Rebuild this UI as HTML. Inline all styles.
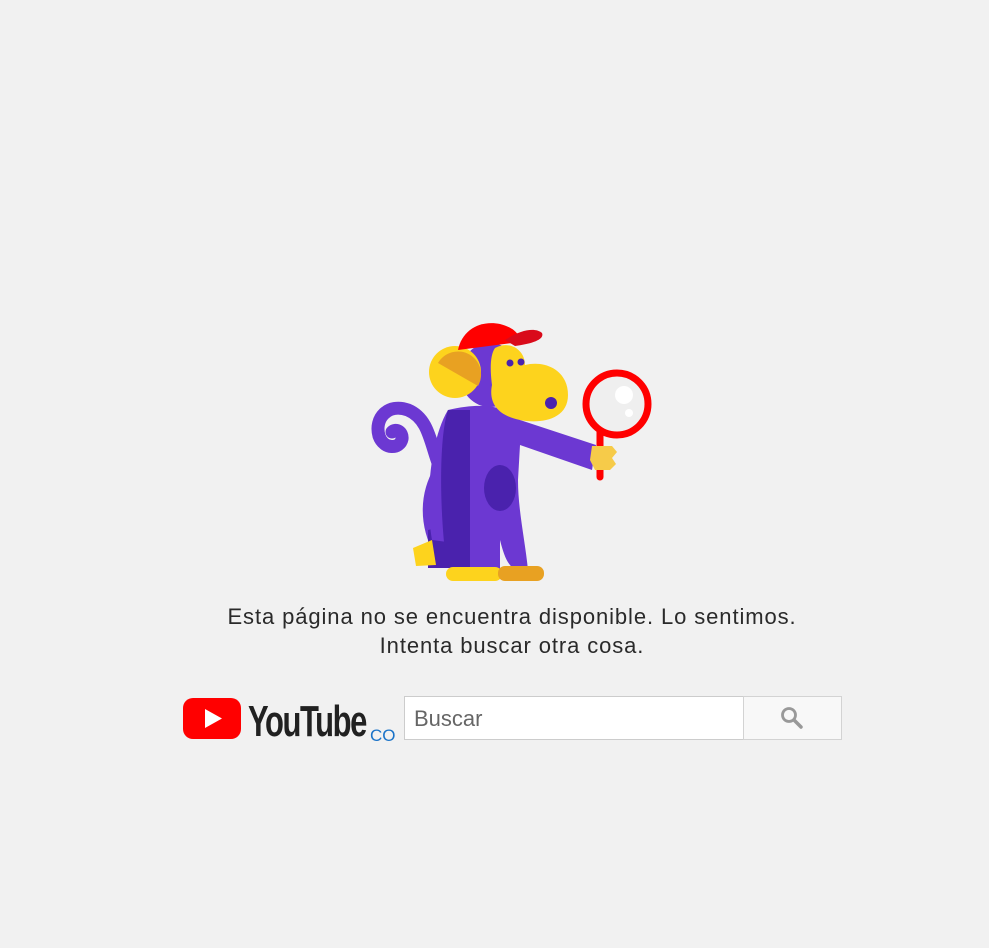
<!DOCTYPE html>
<html><head><meta charset="utf-8"><style>
html,body{margin:0;padding:0;background:#f1f1f1;width:989px;height:948px;overflow:hidden;font-family:"Liberation Sans",Arial,sans-serif}
.t{position:absolute;left:0;width:1024px;text-align:center;font-size:22px;letter-spacing:0.9px;color:#2a2a2a;line-height:28px}
</style></head><body>
<svg style="position:absolute;left:0;top:0" width="989" height="948" viewBox="0 0 989 948">
 <!-- tail -->
 <path d="M445 480 C430 450 432 420 408 410 C388 403 374 418 379 436 C384 450 400 449 402 439 C403 432 396 428 392 432" fill="none" stroke="#6c38d2" stroke-width="13" stroke-linecap="round"/>
 <path d="M440 470 C425 495 425 525 440 552" fill="none" stroke="#6c38d2" stroke-width="12"/>
 <!-- back leg -->
 <path d="M428 530 L470 520 L468 568 L428 568 Z" fill="#4a22ad"/>
 <path d="M413 548 L432 540 L436 565 L416 566 Z" fill="#fdd31d"/>
 <!-- body -->
 <path d="M448 410 C430 440 425 500 432 540 L470 545 L470 575 L500 575 L500 540 C505 560 510 570 520 570 L528 570 C525 540 518 510 518 480 L520 445 L592 470 L596 445 L520 420 C510 410 490 400 448 410 Z" fill="#6c38d2"/>
 <path d="M448 410 C438 440 440 520 447 568 L470 568 L470 410 Z" fill="#4a22ad"/>
 <ellipse cx="500" cy="488" rx="16" ry="23" fill="#4a22ad"/>
 <!-- feet -->
 <rect x="446" y="567" width="56" height="14" rx="7" fill="#fdd31d"/>
 <rect x="498" y="566" width="46" height="15" rx="7" fill="#e8a122"/>
 <!-- head -->
 <ellipse cx="490" cy="375" rx="30" ry="32" fill="#6c38d2"/>
 <circle cx="455" cy="372" r="26" fill="#fdd31d"/>
 <path d="M438 363 A22 22 0 0 1 478 386 Z" fill="#e8a122"/>
 <path d="M495 348 C510 340 525 350 525 365 C545 360 568 370 568 395 C568 420 540 424 520 420 C500 416 488 405 492 385 C490 370 490 355 495 348 Z" fill="#fdd31d"/>
 <circle cx="510" cy="363" r="3.5" fill="#4a22ad"/><circle cx="521" cy="362" r="3.5" fill="#4a22ad"/>
 <circle cx="551" cy="403" r="6" fill="#4a22ad"/>
 <!-- cap -->
 <path d="M458 350 C462 330 480 320 500 324 C515 328 520 335 520 342 Z" fill="#f00"/>
 <path d="M505 340 C520 330 535 327 542 333 C545 340 530 344 515 346 Z" fill="#d90a1a"/>
 <!-- magnifier -->
 <line x1="600" y1="430" x2="600" y2="477" stroke="#f00" stroke-width="7" stroke-linecap="round"/>
 <circle cx="617" cy="404" r="31" fill="#efefef" stroke="#f00" stroke-width="7"/>
 <circle cx="624" cy="395" r="9" fill="#fff"/><circle cx="629" cy="413" r="4" fill="#fff"/>
 <path d="M592 446 L612 446 L617 452 L612 458 L616 464 L610 470 L595 470 L590 460 Z" fill="#f6cb49"/>
 <!-- logo -->
 <rect x="183" y="698" width="58" height="41" rx="10" fill="#f00"/>
 <path d="M205 709 L222 718.5 L205 728 Z" fill="#fff"/>
 <text x="248" y="736" font-family="Liberation Sans, sans-serif" font-weight="bold" font-size="44" fill="#212121" textLength="118" lengthAdjust="spacingAndGlyphs" letter-spacing="-2">YouTube</text>
 <text x="370" y="741" font-family="Liberation Sans, sans-serif" font-size="17" fill="#1a73c8">CO</text>
 <!-- search -->
 <rect x="404.5" y="696.5" width="339" height="43" fill="#fff" stroke="#ccc"/>
 <text x="414" y="726" font-family="Liberation Sans, sans-serif" font-size="22" fill="#666">Buscar</text>
 <rect x="743.5" y="696.5" width="98" height="43" fill="#f8f8f8" stroke="#d3d3d3"/>
 <circle cx="789" cy="715" r="6.5" fill="none" stroke="#999" stroke-width="2.8"/>
 <line x1="794" y1="720" x2="801" y2="727" stroke="#999" stroke-width="3.5" stroke-linecap="round"/>
</svg>
<div class="t" style="top:603px">Esta página no se encuentra disponible. Lo sentimos.</div>
<div class="t" style="top:632px">Intenta buscar otra cosa.</div>
</body></html>
